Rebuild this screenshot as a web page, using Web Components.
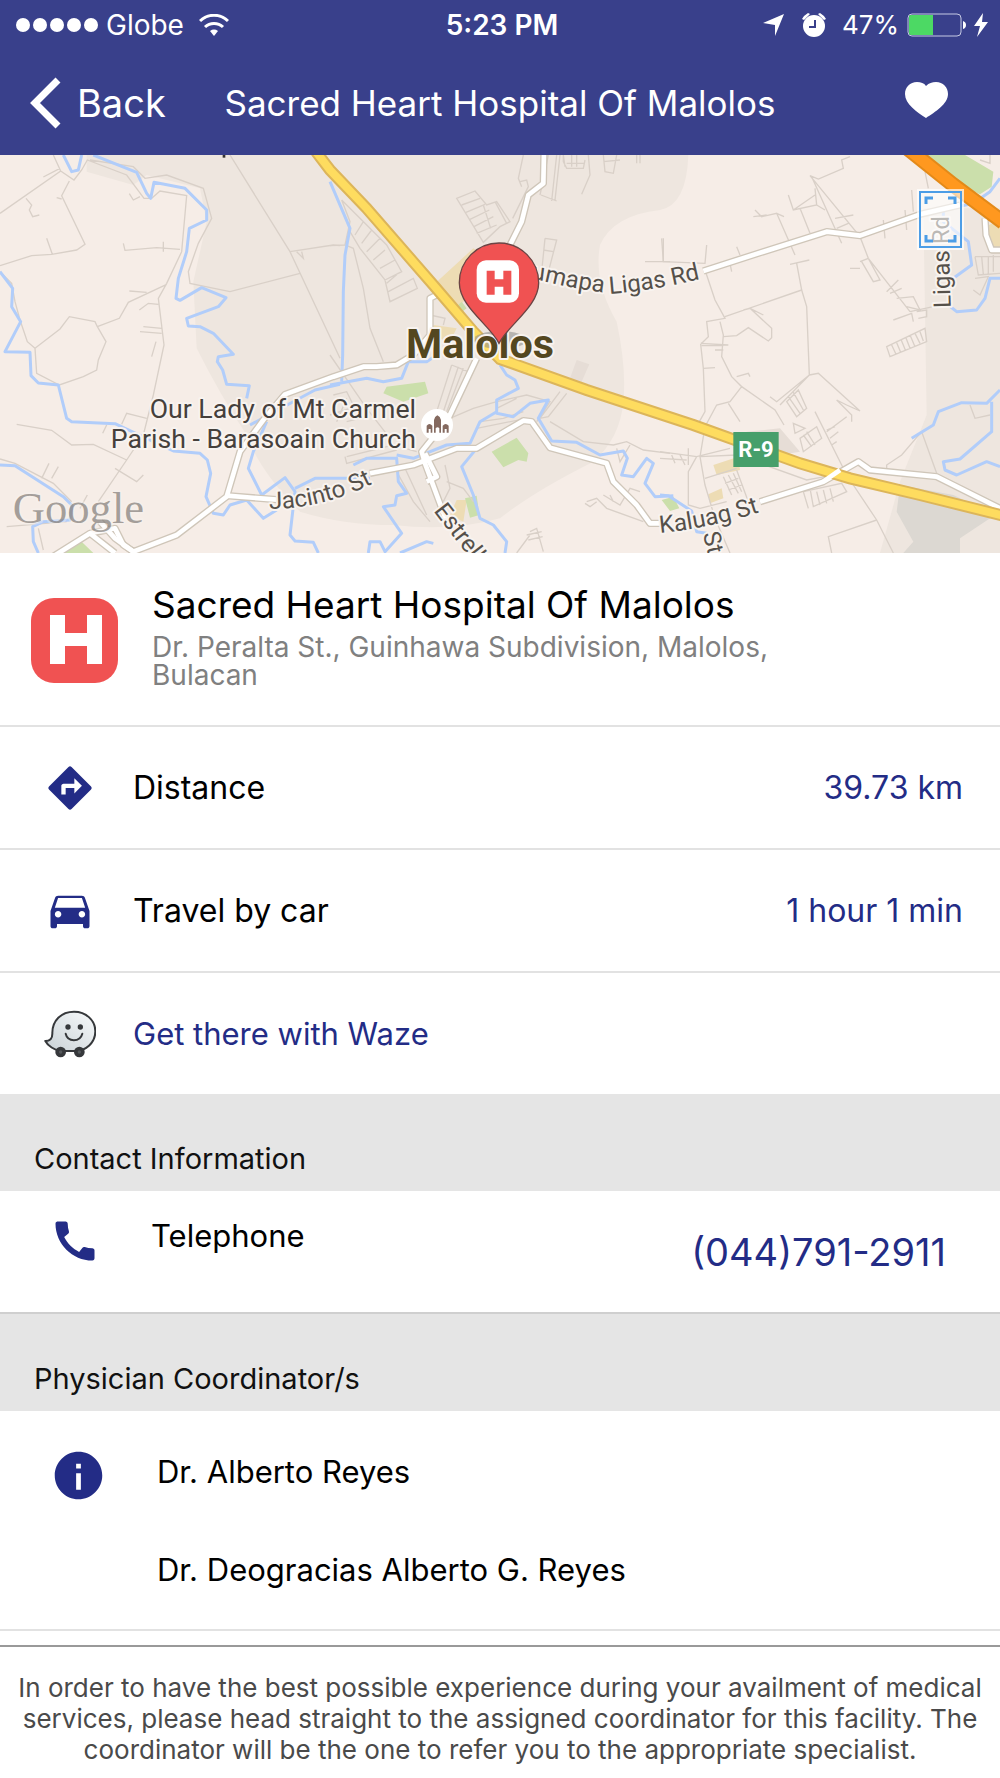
<!DOCTYPE html>
<html lang="en">
<head>
<meta charset="utf-8">
<meta name="viewport" content="width=device-width, initial-scale=1">
<title>Sacred Heart Hospital Of Malolos</title>
<style>
    body {
        margin: 0;
        background: #fff;
        color: #000;
        font-family: Inter, "Liberation Sans", sans-serif;
    }
</style>
</head>
<body>
<status-bar carrier="Globe" time="5:23 PM" battery="47%"></status-bar>
<nav-bar>Sacred Heart Hospital Of Malolos</nav-bar>
<map-view></map-view>
<facility-summary>
    Sacred Heart Hospital Of Malolos
    <span slot="address">Dr. Peralta St., Guinhawa Subdivision, Malolos, Bulacan</span>
</facility-summary>
<info-row icon="directions">Distance<span slot="value">39.73 km</span></info-row>
<info-row icon="car">Travel by car<span slot="value">1 hour 1 min</span></info-row>
<info-row icon="waze" href="#waze">Get there with Waze</info-row>
<section-header>Contact Information</section-header>
<phone-row number="(044)791-2911">Telephone</phone-row>
<section-header>Physician Coordinator/s</section-header>
<coordinator-list>
    <li>Dr. Alberto Reyes</li>
    <li>Dr. Deogracias Alberto G. Reyes</li>
</coordinator-list>
<foot-note>In order to have the best possible experience during your availment of medical services, please head straight to the assigned coordinator for this facility. The coordinator will be the one to refer you to the appropriate specialist.</foot-note>

<script>
const icons = {
    directions: `<svg viewBox="0 0 24 24" aria-hidden="true"><path fill="#232c86" d="M21.71 11.29l-9-9a1 1 0 0 0-1.41 0l-9 9a1 1 0 0 0 0 1.41l9 9c.39.39 1.02.39 1.41 0l9-9a1 1 0 0 0 0-1.41zM14 14.5V12h-4v3H8v-4c0-.55.45-1 1-1h5V7.5l3.5 3.5-3.5 3.5z"/></svg>`,
    car: `<svg viewBox="0 0 24 24" aria-hidden="true"><path fill="#232c86" d="M18.92 6.01C18.72 5.42 18.16 5 17.5 5h-11c-.66 0-1.21.42-1.42 1.01L3 12v7c0 .55.45 1 1 1h1c.55 0 1-.45 1-1v-1h12v1c0 .55.45 1 1 1h1c.55 0 1-.45 1-1v-7l-2.08-5.99zM6.5 15c-.83 0-1.5-.67-1.5-1.5S5.67 12 6.5 12s1.5.67 1.5 1.5S7.33 15 6.5 15zm11 0c-.83 0-1.5-.67-1.5-1.5s.67-1.5 1.5-1.5 1.5.67 1.5 1.5-.67 1.5-1.5 1.5zM5 10.5l1.5-4.5h11l1.5 4.5H5z"/></svg>`,
    waze: `<svg viewBox="0 0 156 156" aria-hidden="true">
        <defs><linearGradient id="g" x1="1" y1="0" x2="0" y2="1"><stop offset="0" stop-color="#f8fafb"/><stop offset="1" stop-color="#c9d1d6"/></linearGradient></defs>
        <path fill="url(#g)" stroke="#36383b" stroke-width="6" stroke-linejoin="round" d="M90 11C126 11 154 37 154 70C154 104 126 129 92 129H50C32 127 11 113 4 99C18 99 25 91 25 77C24 38 52 11 90 11Z"/>
        <circle cx="50" cy="132" r="16" fill="#36383b"/><circle cx="106" cy="132" r="16" fill="#36383b"/>
        <circle cx="50" cy="132" r="5" fill="#55585b"/><circle cx="106" cy="132" r="5" fill="#55585b"/>
        <circle cx="72" cy="57" r="8" fill="#36383b"/><circle cx="109" cy="57" r="8" fill="#36383b"/>
        <path fill="none" stroke="#36383b" stroke-width="6" stroke-linecap="round" d="M65 77C71 103 108 103 115 77"/></svg>`,
    phone: `<svg viewBox="0 0 24 24" aria-hidden="true"><path fill="#232c86" d="M20.01 15.38c-1.23 0-2.42-.2-3.53-.56a.98.98 0 0 0-1.01.24l-1.57 1.97c-2.83-1.35-5.48-3.9-6.89-6.83l1.95-1.66c.27-.28.35-.67.24-1.02-.37-1.11-.56-2.3-.56-3.53 0-.54-.45-.99-.99-.99H4.19C3.65 3 3 3.24 3 3.99 3 13.28 10.73 21 20.01 21c.71 0 .99-.63.99-1.18v-3.45c0-.54-.45-.99-.99-.99z"/></svg>`,
    info: `<svg viewBox="0 0 24 24" aria-hidden="true"><path fill="#232c86" d="M12 2C6.48 2 2 6.48 2 12s4.48 10 10 10 10-4.48 10-10S17.52 2 12 2zm1 16h-2v-7h2v7zm0-9h-2V7h2v2z"/></svg>`
};

class StatusBar extends HTMLElement {

    constructor() {
        super();

        this.root = this.attachShadow({ mode: 'open' });

        this.root.innerHTML = `<style>
    :host {
        display: grid;
        grid-template-columns: 1fr auto 1fr;
        align-items: center;
        height: 50px;
        padding: 0 12px 0 16px;
        background: #39408b;
        color: #fff;
        font-size: 28px;
        line-height: 34px;
    }

    .side {
        display: flex;
        align-items: center;
    }

    .right {
        justify-content: flex-end;
    }

    svg {
        display: block;
        fill: #fff;
    }

    .carrier {
        margin: 0 15px 0 8px;
    }

    .time {
        font-weight: 600;
    }

    .alarm {
        margin: 0 16px 0 18px;
    }

    .battery {
        margin: 0 8px;
    }

    .percent {
        font-size: 26px;
    }
</style>
<div class="side">
    <svg width="82" height="14" viewBox="0 0 82 14"><circle cx="7" cy="7" r="7"/><circle cx="24" cy="7" r="7"/><circle cx="41" cy="7" r="7"/><circle cx="58" cy="7" r="7"/><circle cx="75" cy="7" r="7"/></svg>
    <span class="carrier"></span>
    <svg width="30" height="22" viewBox="0 0 30 22"><path d="M15 22l-4-5a7 7 0 0 1 8 0z"/><path fill="none" stroke="#fff" stroke-width="3" d="M1 7a20 20 0 0 1 28 0M6 13a13 13 0 0 1 18 0"/></svg>
</div>
<div class="time"></div>
<div class="side right">
    <svg width="21" height="22" viewBox="0 0 21 22"><path d="M21 0L12 22V11L0 9z"/></svg>
    <svg class="alarm" width="24" height="24" viewBox="0 0 24 24"><circle cx="12" cy="13" r="11"/><path d="M0 6a16 16 0 0 1 6-6l2 1-6 6zM24 6a16 16 0 0 0-6-6l-2 1 6 6z"/><path fill="none" stroke="#39408b" stroke-width="2" d="M13 7v7H7"/></svg>
    <span class="percent"></span>
    <svg class="battery" width="59" height="24" viewBox="0 0 59 24"><rect x="1" y="1" width="53" height="22" rx="4" fill="none" stroke="#c6c9e4"/><path fill="#4cd964" d="M4 2h22v20H4a2 2 0 0 1-2-2V4a2 2 0 0 1 2-2z"/><path d="M56 8q3 1 3 4t-3 4z"/></svg>
    <svg width="14" height="24" viewBox="0 0 14 24"><path d="M9 0L0 13h6L3 24 14 9H8z"/></svg>
</div>`;
    }

    connectedCallback() {
        this.root.querySelector('.carrier').textContent = this.getAttribute('carrier');
        this.root.querySelector('.time').textContent = this.getAttribute('time');
        this.root.querySelector('.percent').textContent = this.getAttribute('battery');
    }
}
customElements.define('status-bar', StatusBar);

class NavBar extends HTMLElement {

    constructor() {
        super();

        this.root = this.attachShadow({ mode: 'open' });

        this.root.innerHTML = `<style>
    :host {
        display: grid;
        grid-template-columns: 1fr auto 1fr;
        align-items: center;
        height: 105px;
        padding: 0 30px;
        background: #39408b;
        color: #fff;
    }

    button {
        display: flex;
        align-items: center;
        justify-self: start;
        gap: 16px;
        padding: 0;
        border: 0;
        background: none;
        color: inherit;
        font: 38px/48px Inter, "Liberation Sans", sans-serif;
    }

    .favourite {
        justify-self: end;
        padding: 0 22px 6px;
    }

    h1 {
        margin: 0;
        font-size: 35px;
        line-height: 44px;
        font-weight: 400;
    }

    svg {
        display: block;
    }
</style>
<button type="button"><svg width="31" height="52" viewBox="0 0 31 52"><path fill="none" stroke="#fff" stroke-width="7" d="M28 3L5 26l23 23"/></svg>Back</button>
<h1><slot></slot></h1>
<button class="favourite" type="button" aria-label="Favourite"><svg width="43" height="36" viewBox="0 0 43 36"><path fill="#fff" d="M21 36C12 30 0 22 0 12 0 5 5 0 12 0c4 0 7 1 9 4 3-3 6-4 10-4 7 0 12 5 12 12 0 10-13 18-22 24z"/></svg></button>`;
    }
}
customElements.define('nav-bar', NavBar);

class MapView extends HTMLElement {

    constructor() {
        super();

        this.root = this.attachShadow({ mode: 'open' });

        this.root.innerHTML = `<style>
    :host {
        display: block;
        position: relative;
        overflow: hidden;
        font-family: Roboto, "Liberation Sans", sans-serif;
    }

    .map {
        display: block;
        width: 100%;
        height: auto;
    }

    .lane { fill: none; stroke: #d9d0c8; stroke-width: 4; }
    .water { fill: none; stroke: #b1cdfa; stroke-width: 9; stroke-linejoin: round; }
    .case { fill: none; stroke: #cfc6b9; stroke-width: 22; stroke-linejoin: round; }
    .road { fill: none; stroke: #fff; stroke-width: 14; stroke-linejoin: round; }
    .park { fill: #cbdfab; }
    .sand { fill: #eddcb4; }

    text {
        fill: #55504a;
        stroke: #f8f3ef;
        stroke-width: 12;
        stroke-linejoin: round;
        paint-order: stroke;
        font-size: 72px;
    }

    .poi { font-size: 80px; text-anchor: end; fill: #45403c; }
    .town { font-size: 124px; font-weight: 700; fill: #54471f; }
    .shield { font-size: 66px; font-weight: 700; fill: #fff; stroke: none; text-anchor: middle; }
    .brand { font: 134px "Liberation Serif", serif; fill: #6d6864; fill-opacity: .6; stroke-opacity: .4; }

    button {
        position: absolute;
        top: 9%;
        right: 38px;
        width: 43px;
        height: 57px;
        padding: 0;
        border: 2px solid #4c9de6;
        background: rgba(255, 255, 255, .6);
        box-shadow: 0 0 0 2px rgba(255, 255, 255, .7);
    }

    button svg {
        display: block;
        margin: auto;
    }
</style>
<svg class="map" viewBox="0 0 3000 1194" role="img" aria-label="Map of Malolos">
    <defs>
        <path id="lumapa" d="M1556 368L1620 376Q1730 404 1840 416Q1970 405 2135 364"/>
        <path id="jacinto" d="M808 1062Q970 1062 1130 980"/>
        <path id="estrella" d="M1300 1068L1480 1300"/>
        <path id="kaluag" d="M1980 1134Q2134 1120 2300 1064"/>
        <path id="ligas" d="M2852 458Q2848 330 2846 170"/>
        <path id="st" d="M2108 1136L2140 1260"/>
    </defs>
    <rect width="3000" height="1194" fill="#f6ede7"/>
    <!-- built-up areas -->
    <path fill="#eee6df" d="M260 0H2065Q2060 150 1980 165Q1840 180 1800 270Q1780 380 1850 500Q1880 640 1870 740Q1860 850 1780 920Q1600 1010 1500 1090Q1360 1130 1180 1110Q1030 1110 900 1070Q780 950 740 840Q660 720 590 580L580 380L620 200L600 100L440 60L400 90L260 50z"/>
    <path fill="#eee6df" d="M2770 160H3000V1194H2640L2700 980L2780 780z"/>
    <path fill="#dcd8d2" d="M2700 990L2860 1020L2985 1080L2880 1150V1194H2710L2740 1160L2690 1070z"/>
    <path fill="#e6ddd6" d="M2240 830L2340 820L2400 890L2340 900L2240 870zM1730 615L1768 628L1745 680L1710 670z"/>
    <path class="sand" d="M1300 390L1420 280L1450 300L1440 390L1360 470zM1300 510L1370 520L1350 560L1300 545zM1370 1035H1400L1390 1100L1350 1080zM2140 930L2215 905L2220 945L2150 960zM2125 1018L2165 1000L2170 1030L2130 1045zM2955 215L3000 195V280H2975z"/>
    <path class="park" d="M1160 695L1275 680L1285 715L1210 740L1150 715zM1475 890L1550 848L1585 895L1580 920L1555 915L1510 937zM1395 1030L1430 1022L1438 1080L1410 1088zM190 1194L245 1160L280 1194zM2780 0H2895L2980 50L2975 95L2940 118L2880 90zM1985 1035L2020 1025L2038 1060L2010 1068zM1365 460L1385 440L1400 460L1380 475z"/>
    <!-- side streets -->
    <path class="lane" d="M160 0L182 48L0 175M182 48L222 75L245 45L262 15L380 60L432 130H455L480 108L560 122L545 290L500 385L475 430L492 570L460 720L430 840L380 915L295 1040M78 130L95 150L88 165L98 185L118 180M130 66L180 40M208 78L185 122L255 268L230 285L155 298L95 302L0 332M140 250L157 298M370 265L375 286L470 278L540 283M490 260V290M170 128L185 132M388 116L400 135L420 125M500 388L385 442L358 490L292 515L318 560L295 615L290 645L250 665L178 690L110 655L105 580L180 522L208 485L285 500L292 515M0 350L35 385L45 440L60 495L82 560L105 580M50 808L155 826L215 870L280 868L380 915M365 808L380 775L440 790M320 810L308 835M0 912L45 925L160 985L215 1040M125 970L147 925M155 970L175 935M345 940L410 980L430 960M240 1060L262 1020M388 408L440 412M418 465L445 445L475 448M430 515L485 520M420 530L485 535M468 560L455 605M270 15L400 35L435 70L500 60L610 100L635 190L595 265L565 350L570 385L690 410L900 355M690 0L870 290L1020 610M870 290L1000 270L1020 272M890 290L910 310L905 290M20 1115L200 1100M115 1120L130 1185"/>
    <path class="lane" transform="translate(990)" d="M380 130L435 108L470 150L500 140L540 200L510 215L460 262zM395 150L450 130M408 172L465 148M420 193L478 165M432 215L490 185M440 235L500 210M460 150L482 220M495 140L530 205M580 0L565 70L575 95M570 80L590 75L595 95L548 190M630 120L655 0M665 138L680 0M675 135L690 0M633 120L680 138M700 0V20L710 40H760L765 15M710 25H765M725 0V35M740 0V35M775 0L780 60L755 118M820 0L825 50L850 55L860 0M820 20L870 15M920 0V25M930 0V25M0 272L45 270L70 280L100 400L120 520L160 620M35 135L60 200L45 270M35 135L170 270L215 350L165 375L90 280L60 230M75 240L100 200M95 265L125 225M110 290L150 250M130 315L165 285M150 340L195 315M165 375L180 440L262 400L250 370L175 410M170 385L205 355M300 480L345 490L340 510M645 250L680 255L650 370M645 250L635 350M640 285L670 290M1000 250L1000 320M945 320H1020M365 630L320 770M385 635L340 770M400 640L350 770M365 630L415 650M0 600L110 760L180 850M10 720L50 710L90 790L50 800M0 780L60 760M20 800L50 730M50 905L190 870L260 890M45 905L50 925L200 885M200 950L250 1040L300 1100M225 940L290 1080M345 930L360 1000L340 1040M350 980L400 1000L430 1040M360 790L430 760L500 740L590 720L660 740L620 800M450 800L520 790L580 770M440 820L590 790M500 760L560 730M690 710L630 790L655 785L710 715M700 0L705 35M660 800L760 860L850 870L890 860L940 885L1020 895M860 880L870 920L900 870M770 1040L800 1030L830 1060L940 1100M765 1045L780 1055L800 1040M820 1020L870 1050L900 1000L930 1010M840 1020L850 1040M600 1130L620 1120L640 1190M590 1140L635 1130M595 1155L638 1145M560 1194L600 1140"/>
    <path class="lane" transform="translate(1980)" d="M570 5L545 15L550 40L475 72L450 62L600 245L625 310L750 470M455 65L545 265M465 100L470 150L400 165L385 120M420 160L450 235M400 165L465 120M470 150L495 165M285 165L305 185L350 175L405 300M280 185L320 180M350 175L372 185M525 190L580 180M530 220L565 205M670 195L675 250M735 165L740 225M755 105L760 170M795 50L805 100M5 250L10 320L135 325L140 270M230 275L240 300M210 325L215 350M135 345L165 435L195 490L140 500L145 545L122 568L130 640L135 770L118 800M390 328L448 315M410 325L425 405L440 455L448 660M195 485L425 405M250 465L270 460L335 520V548L325 558L265 518L230 542L190 545M270 460L310 480M122 565L205 570M125 572H190M180 500L190 540L185 605L215 665L245 695L210 740L170 750L135 815L120 905L135 990L165 1090L210 1194M165 585H190M130 640L165 638M245 695L345 765L372 810M230 665L265 655L270 665M205 745L240 800M448 660L475 655L600 768L560 750L530 735L575 780V800M448 660L350 740L330 725M448 660L360 750M380 740L415 705L440 760L410 785zM385 725L420 775M400 712L430 765M465 770L560 960L650 1095L700 1194M400 805L435 820L405 835zM420 850L470 815L485 850L430 890zM430 840L455 875M440 830L465 870M500 825L525 815M510 850L535 830M515 870L530 860M560 785L500 830M0 890L110 905L210 880M85 880V930M35 900L45 925M0 910L80 915M60 900L75 930M110 905L85 950V1050L120 1060M120 905L230 900L440 975L495 965M120 1060L200 1040M135 970L230 940M190 965L215 1020M205 960L235 1015M220 955L245 1010M195 985L235 970M205 1005L245 990M230 945L265 1040M430 1010L545 985L560 1010L460 1055L450 1000M470 1010L480 1050M490 1005L500 1045M510 1000L520 1040M430 1010L445 1060M650 1095L505 1145L515 1194M600 340L570 340M600 320L625 310L660 375L640 380L605 320M715 375L680 410M725 400L690 415M710 430L760 425L780 465L740 455M750 470L820 455M700 495L755 475L760 500M770 470L800 465V485L775 490M680 575L795 520L800 560L690 605zM695 570L708 598M710 563L722 592M724 556L736 585M738 549L750 580M750 540L765 575M765 535L780 565M780 530L790 558M945 305H1020M945 305L955 360L1020 355M965 305L970 358M985 305V358M1000 300V350M945 370L985 365L960 420L940 405M785 830L830 955M785 830L725 900L680 930V950M930 750L945 790L990 780M960 15L990 25V0"/>
    <!-- rivers -->
    <path class="water" d="M190 0L215 50L235 45L245 0M280 0L410 52L440 115L452 130L462 82L555 100L620 165V195L568 220L560 290L535 370L528 430L540 436L605 398L678 428L655 455L560 490L565 513L600 515L640 535L700 598L655 605L652 620L668 645L680 688L748 692L740 730M0 350L38 400L35 455L62 500L15 590L90 592L93 662L115 684L175 690L200 790L215 800L345 806L520 888L600 895L622 915L632 955L618 1025L640 1075L670 1080L690 1050L740 1035L790 1090L830 1065M0 930L45 932L190 1025L215 1050L210 1095L130 1100L98 1115L100 1160L115 1194M800 800L760 890L745 940L785 1020L855 968L885 1010L870 1140L885 1158L940 1162L955 1194M885 1000L945 970H1110M1020 688L945 705L750 810"/>
    <path class="water" transform="translate(990)" d="M0 80L60 220L45 300L40 410L38 600L35 680M0 690L110 670L160 680L215 670L235 620H290L320 600M510 630L530 660L555 675L565 700L500 735V775L550 785L600 745L655 735L625 790L665 858L740 862L810 900L880 888L892 910L875 960L910 965L950 910L970 925L945 985L975 1025L1030 1022M200 900L250 910L350 870L420 865L450 800L500 770M70 930L110 910L200 910L205 980L230 1015L200 1022L195 1050L160 1055L215 1135L165 1190L150 1160H120L115 1194M440 880L395 935L430 1020L450 1090L490 1110L530 1160L525 1194M210 1194L290 1160L310 1165"/>
    <path class="water" transform="translate(1980)" d="M1020 70L990 110L940 145L850 165V200L925 260L935 330L880 370M865 450L890 470L950 465L975 430L990 370H1020M755 850L820 810L835 770L905 743L980 745L1020 705M995 740V830L900 912L850 920L855 945L890 960L980 920L1020 935M0 1020L25 1022L95 1068L110 1130L140 1135"/>
    <!-- white roads -->
    <g id="roads"></g>
    <!-- highways -->
    <path fill="none" stroke="#dcb55a" stroke-width="36" d="M948 -10L990 45L1100 160L1300 390L1420 530L1500 612L1760 705L2080 810L2400 925L2550 970L2760 1020L3010 1082"/>
    <path fill="none" stroke="#fedc5f" stroke-width="24" d="M948 -10L990 45L1100 160L1300 390L1420 530L1500 612L1760 705L2080 810L2400 925L2550 970L2760 1020L3010 1082"/>
    <path class="road" d="M2470 980L2520 945"/>
    <path fill="none" stroke="#e38a1a" stroke-width="46" d="M2725 -18L2860 90L3010 202"/>
    <path fill="none" stroke="#ff981f" stroke-width="34" d="M2725 -18L2860 90L3010 202"/>
    <rect x="668" y="0" width="8" height="8" fill="#37332f" stroke="none"/>

    <text class="poi" x="1248" y="790">Our Lady of Mt Carmel</text>
    <text class="poi" x="1248" y="880">Parish - Barasoain Church</text>
    <ellipse cx="1500" cy="555" rx="80" ry="27" fill="#8a8a88" fill-opacity=".55"/>
    <text class="town" x="1218" y="608">Malolos</text>
    <text><textPath href="#lumapa">Lumapa Ligas Rd</textPath></text>
    <text><textPath href="#jacinto">Jacinto St</textPath></text>
    <text><textPath href="#estrella">Estrella</textPath></text>
    <text><textPath href="#kaluag">Kaluag St</textPath></text>
    <text><textPath href="#ligas">Ligas Rd</textPath></text>
    <text><textPath href="#st">St</textPath></text>
    <text class="brand" x="38" y="1103">Google</text>

    <circle cx="1311" cy="810" r="48" fill="#fff"/>
    <path fill="#84695f" d="M1302 833V795Q1304 785 1312 781Q1321 785 1323 795V833H1318V820Q1313 814 1307 820V833zM1280 833V812Q1288 802 1297 812V833H1292V822H1286V833zM1328 833V812Q1337 802 1346 812V833H1340V822H1334V833z"/>
    <rect x="2200" y="831" width="136" height="105" fill="#469f6b"/>
    <text class="shield" x="2268" y="906">R-9</text>
    <path fill="#f05252" stroke="#6b4444" stroke-width="4" d="M1497 565C1470 510 1378 455 1378 383A119 119 0 0 1 1616 383C1616 455 1524 510 1497 565z"/>
    <rect x="1430" y="316" width="127" height="127" rx="28" fill="#fff"/>
    <path fill="#f05252" d="M1460 347h24v26h26v-26h24v72h-24v-24h-26v24h-24z"/>
</svg>
<button type="button" aria-label="Full screen"><svg width="33" height="47" viewBox="0 0 33 47"><path fill="none" stroke="#4c9de6" stroke-width="3" d="M2 8V2h7M24 2h7v6M2 39v6h7M24 45h7v-6"/></svg></button>`;

        // casing first, then the white surface over it
        const roads = [
            'M160 1204L270 1135L345 1120L370 1170L400 1190L530 1140L680 1025L720 890L790 795L855 718L1000 665L1090 635H1130L1190 630L1240 600L1290 540V430L1310 420',
            'M680 1022L830 1034M270 1135L345 1194M300 1100L345 1150L400 1190',
            'M1632 -10L1630 85L1585 120L1565 200L1530 270L1500 360M1430 610L1345 790L1265 890L1275 925L1340 1100',
            'M1275 895L1310 965L1280 980M1110 955L1240 930L1370 880H1430L1570 797L1595 800L1650 878L1820 925L1840 980L1910 1050L1950 1105H1985',
            'M2110 348L2290 290L2480 230L2580 242L2760 178L2880 150M2955 190L2958 240L2975 285H3010M2280 1040L2470 980L2575 920L2610 945L2810 965L3010 1065'
        ];
        this.root.querySelector('#roads').innerHTML = roads.map(d => `<path class="case" d="${d}"/>`).join('')
            + roads.map(d => `<path class="road" d="${d}"/>`).join('');
    }
}
customElements.define('map-view', MapView);

class FacilitySummary extends HTMLElement {

    constructor() {
        super();

        this.root = this.attachShadow({ mode: 'open' });

        this.root.innerHTML = `<style>
    :host {
        display: flex;
        gap: 34px;
        padding: 30px 180px 36px 31px;
        border-bottom: 2px solid #e2e2e2;
    }

    svg {
        flex: none;
        align-self: flex-end;
        margin-bottom: 6px;
    }

    h2 {
        margin: 0 0 6px;
        font-size: 37px;
        line-height: 44px;
        font-weight: 400;
    }

    p {
        margin: 0;
        color: #808080;
        font-size: 28px;
        line-height: 28px;
    }
</style>
<svg width="87" height="85" viewBox="0 0 87 85"><rect width="87" height="85" rx="23" fill="#f05252"/><path fill="#fff" d="M19 17h15v18h22V17h15v49H56V48H34v18H19z"/></svg>
<div>
    <h2><slot></slot></h2>
    <p><slot name="address"></slot></p>
</div>`;
    }
}
customElements.define('facility-summary', FacilitySummary);

class InfoRow extends HTMLElement {

    constructor() {
        super();

        this.root = this.attachShadow({ mode: 'open' });
    }

    connectedCallback() {
        const href = this.getAttribute('href');
        const label = href ? `<a class="label" href="${href}"><slot></slot></a>` : '<span class="label"><slot></slot></span>';

        this.root.innerHTML = `<style>
    :host {
        display: flex;
        align-items: center;
        gap: 37px;
        height: 121px;
        padding: 0 37px 0 44px;
        border-bottom: 2px solid #e2e2e2;
        font-size: 32px;
        line-height: 40px;
    }

    :host([href]) {
        border-bottom: 0;
    }

    svg {
        flex: none;
        width: 52px;
        height: 52px;
    }

    .label {
        flex: 1;
    }

    a.label {
        color: #232c86;
        font-size: 31px;
        text-decoration: none;
    }

    .value {
        color: #232c86;
    }
</style>
${icons[this.getAttribute('icon')]}
${label}
<span class="value"><slot name="value"></slot></span>`;
    }
}
customElements.define('info-row', InfoRow);

class SectionHeader extends HTMLElement {

    constructor() {
        super();

        this.root = this.attachShadow({ mode: 'open' });

        this.root.innerHTML = `<style>
    :host {
        display: block;
        padding: 48px 34px 15px;
        background: #e5e5e5;
    }

    h3 {
        margin: 0;
        color: #111;
        font-size: 29px;
        line-height: 34px;
        font-weight: 400;
    }
</style>
<h3><slot></slot></h3>`;
    }
}
customElements.define('section-header', SectionHeader);

class PhoneRow extends HTMLElement {

    constructor() {
        super();

        this.root = this.attachShadow({ mode: 'open' });

        this.root.innerHTML = `<style>
    :host {
        display: flex;
        align-items: flex-start;
        gap: 50px;
        padding: 24px 54px 39px 49px;
        border-bottom: 2px solid #cfcfcf;
        font-size: 31px;
        line-height: 42px;
    }

    svg {
        flex: none;
        width: 52px;
        height: 52px;
    }

    .label {
        flex: 1;
    }

    a {
        margin-top: 16px;
        color: #232c86;
        font-size: 38px;
        text-decoration: none;
    }
</style>
${icons.phone}
<span class="label"><slot></slot></span>
<a></a>`;
    }

    connectedCallback() {
        const number = this.getAttribute('number');
        const link = this.root.querySelector('a');
        link.textContent = number;
        link.href = 'tel:' + number.replace(/\D/g, '');
    }
}
customElements.define('phone-row', PhoneRow);

class CoordinatorList extends HTMLElement {

    constructor() {
        super();

        this.root = this.attachShadow({ mode: 'open' });

        this.root.innerHTML = `<style>
    :host {
        display: flex;
        align-items: flex-start;
        gap: 50px;
        padding: 36px 50px 34px;
        border-bottom: 2px solid #e2e2e2;
    }

    svg {
        flex: none;
        width: 57px;
        height: 57px;
    }

    ul {
        display: flex;
        flex-direction: column;
        gap: 48px;
        margin: 0;
        padding: 0;
        list-style: none;
        font-size: 31px;
        line-height: 50px;
    }
</style>
${icons.info}
<ul><slot></slot></ul>`;
    }
}
customElements.define('coordinator-list', CoordinatorList);

class FootNote extends HTMLElement {

    constructor() {
        super();

        this.root = this.attachShadow({ mode: 'open' });

        this.root.innerHTML = `<style>
    :host {
        display: block;
        margin-top: 14px;
        padding: 25px 8px 13px;
        border-top: 2px solid #999;
        color: #4a4a4a;
        font-size: 26px;
        line-height: 31px;
        text-align: center;
    }

    p {
        margin: 0;
    }
</style>
<p><slot></slot></p>`;
    }
}
customElements.define('foot-note', FootNote);
</script>
</body>
</html>
